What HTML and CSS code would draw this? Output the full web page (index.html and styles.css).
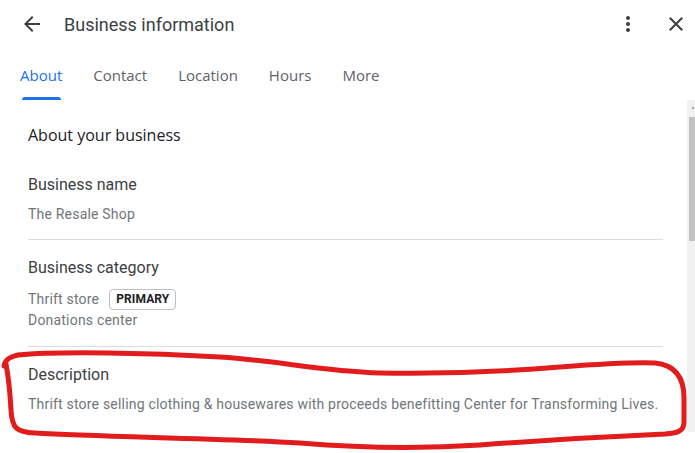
FILE: index.html
```html
<!DOCTYPE html>
<html>
<head>
<meta charset="utf-8">
<link rel="stylesheet" href="styles.css">
</head>
<body>
<div class="page">
  <header class="topbar">
    <svg class="icon back" viewBox="0 0 24 24"><path d="M20 11H7.83l5.59-5.59L12 4l-8 8 8 8 1.41-1.41L7.83 13H20v-2z"/></svg>
    <h1 class="title">Business information</h1>
    <div class="actions">
      <svg class="icon" viewBox="0 0 24 24"><path d="M12 8c1.1 0 2-.9 2-2s-.9-2-2-2-2 .9-2 2 .9 2 2 2zm0 2c-1.1 0-2 .9-2 2s.9 2 2 2 2-.9 2-2-.9-2-2-2zm0 6c-1.1 0-2 .9-2 2s.9 2 2 2 2-.9 2-2-.9-2-2-2z"/></svg>
      <svg class="icon" viewBox="0 0 24 24"><path d="M19 6.41L17.59 5 12 10.59 6.41 5 5 6.41 10.59 12 5 17.59 6.41 19 12 13.41 17.59 19 19 17.59 13.41 12z"/></svg>
    </div>
  </header>
  <nav class="tabs">
    <div class="tab active">About</div>
    <div class="tab">Contact</div>
    <div class="tab">Location</div>
    <div class="tab">Hours</div>
    <div class="tab">More</div>
  </nav>
  <div class="body">
    <main class="content">
      <h2 class="heading">About your business</h2>
      <section class="section">
        <div class="label">Business name</div>
        <div class="value">The Resale Shop</div>
      </section>
      <section class="section">
        <div class="label">Business category</div>
        <div class="value row">Thrift store <span class="chip">PRIMARY</span></div>
        <div class="value">Donations center</div>
      </section>
      <section class="section last">
        <div class="label">Description</div>
        <div class="value desc">Thrift store selling clothing &amp; housewares with proceeds benefitting Center for Transforming Lives.</div>
      </section>
    </main>
    <div class="scrollbar">
      <div class="arrow"></div>
      <div class="thumb"></div>
    </div>
  </div>
  <svg class="annotation" viewBox="0 0 695 453" width="695" height="453">
    <path d="M 4 366 C 5 360, 9 357, 18 355 C 60 351, 150 353, 220 357 C 280 361, 320 371, 380 373 C 440 374, 500 372, 560 367 C 600 364, 630 362, 655 363 C 676 365, 684 378, 684 398 L 684 422 C 684 431, 678 433, 665 434 C 620 436, 560 439, 480 445 C 420 449, 360 448, 300 443 C 220 438, 100 437, 35 433 C 16 432, 12 428, 11 410 C 10 390, 8 375, 6 364"/>
  </svg>
</div>
</body>
</html>
```

FILE: styles.css
```css
* { box-sizing: border-box; }
html, body { margin: 0; padding: 0; background: #fff; }
body {
  font-family: Roboto, "Liberation Sans", sans-serif;
  width: 695px;
  height: 453px;
  overflow: hidden;
}
.page {
  position: relative;
  width: 695px;
  height: 453px;
}
.topbar {
  height: 48px;
  display: flex;
  align-items: center;
  padding: 0 7px 0 20px;
}
.icon {
  width: 24px;
  height: 24px;
  fill: #3c4043;
  flex: none;
}
.title {
  margin: 0 0 0 20px;
  font-size: 18px;
  font-weight: 400;
  color: #3c4043;
  flex: 1;
}
.actions {
  display: flex;
  gap: 24px;
}
.tabs {
  height: 52px;
  display: flex;
  gap: 31px;
  padding-left: 20px;
}
.tab {
  position: relative;
  font-family: "Open Sans", Roboto, sans-serif;
  font-size: 15px;
  font-weight: 500;
  color: #5f6368;
  display: flex;
  align-items: center;
  padding-top: 2px;
}
.tab.active { color: #1a73e8; }
.tab.active::after {
  content: "";
  position: absolute;
  left: 2px;
  right: 1px;
  bottom: 0;
  height: 3px;
  background: #1a73e8;
  border-radius: 3px 3px 0 0;
}
.body {
  display: flex;
  height: 353px;
}
.content {
  flex: 1;
  padding: 25px 24px 0 28px;
}
.heading {
  margin: 0;
  font-family: "Open Sans", Roboto, sans-serif;
  font-size: 16px;
  font-weight: 500;
  line-height: 20px;
  color: #202124;
  margin-bottom: 28px;
}
.section {
  padding: 16px 0 16px;
  border-bottom: 1px solid #dadce0;
}
.section:first-of-type { padding-top: 0; padding-bottom: 15px; }
.section.last { border-bottom: none; }
.label {
  font-size: 16px;
  line-height: 24px;
  color: #3c4043;
  margin-bottom: 7px;
}
.value {
  font-size: 14px;
  line-height: 20px;
  color: #70757a;
  letter-spacing: 0.2px;
}
.value.desc { margin-top: 7px; }
.value.row {
  display: flex;
  align-items: center;
  gap: 10px;
  height: 22px;
  margin-top: 8px;
}
.chip {
  display: inline-flex;
  align-items: center;
  height: 21px;
  padding: 0 6px;
  border: 1px solid #bdc1c6;
  border-radius: 4px;
  font-size: 12px;
  font-weight: 700;
  color: #202124;
  letter-spacing: 0.1px;
}
.scrollbar {
  width: 8px;
  height: 332px;
  background: #f1f1f1;
  display: flex;
  flex-direction: column;
  align-items: flex-end;
}
.arrow {
  width: 0;
  height: 0;
  margin: 6px 1px 0 0;
  border-left: 3px solid transparent;
  border-bottom: 3px solid #a3a3a3;
}
.thumb {
  margin-top: 8px;
  width: 6px;
  height: 124px;
  background: #c1c1c1;
}
.annotation {
  position: absolute;
  left: 0;
  top: 0;
  pointer-events: none;
}
.annotation path {
  fill: none;
  stroke: #e21c1c;
  stroke-width: 5;
  stroke-linecap: round;
  stroke-linejoin: round;
}
```
